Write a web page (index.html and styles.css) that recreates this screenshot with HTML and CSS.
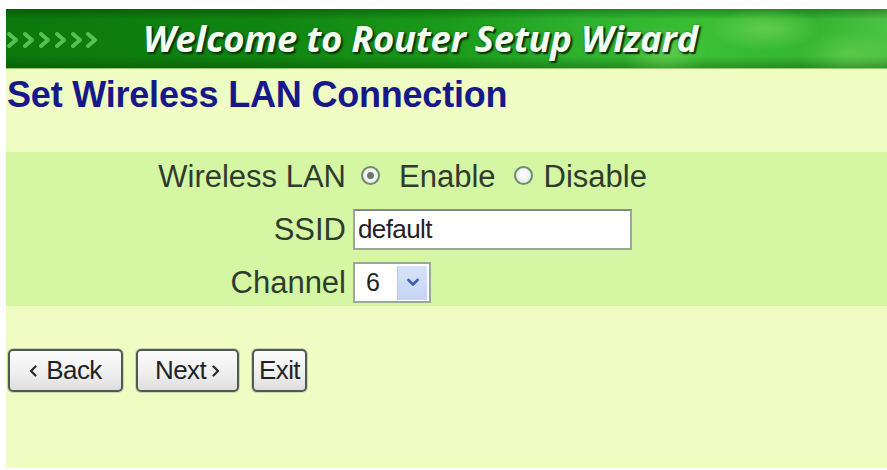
FILE: index.html
```html
<!DOCTYPE html>
<html lang="en">
<head>
<meta charset="utf-8">
<title>Router Setup Wizard</title>
<link rel="stylesheet" href="styles.css">
</head>
<body>
<div class="page">
  <div class="banner">
    <svg class="arrows" width="96" height="18" viewBox="0 0 96 18">
      <g fill="none" stroke="#66d466" stroke-width="3.8" stroke-linecap="round" stroke-linejoin="round" opacity="0.8">
        <path d="M2 3 L9 9 L2 15"/>
        <path d="M18 3 L25 9 L18 15"/>
        <path d="M34 3 L41 9 L34 15"/>
        <path d="M50 3 L57 9 L50 15"/>
        <path d="M66 3 L73 9 L66 15"/>
        <path d="M81 3 L88 9 L81 15"/>
      </g>
    </svg>
    <span class="banner-title">Welcome to Router Setup Wizard</span>
  </div>
  <h1 class="title">Set Wireless LAN Connection</h1>
  <div class="band">
    <div class="row">
      <div class="label">Wireless LAN</div>
      <div class="control">
        <span class="opt opt-first"><span class="radio checked"></span>Enable</span>
        <span class="opt"><span class="radio"></span>Disable</span>
      </div>
    </div>
    <div class="row">
      <div class="label">SSID</div>
      <div class="control">
        <div class="input">default</div>
      </div>
    </div>
    <div class="row">
      <div class="label">Channel</div>
      <div class="control">
        <div class="select">
          <span class="select-value">6</span>
          <span class="select-btn">
            <svg width="12" height="9" viewBox="0 0 12 9"><path d="M1.5 2 L6 6.5 L10.5 2" fill="none" stroke="#3d5fb0" stroke-width="2.6" stroke-linecap="round" stroke-linejoin="round"/></svg>
          </span>
        </div>
      </div>
    </div>
  </div>
  <div class="buttons">
    <button class="btn btn-back"><svg class="chev chev-l" width="8" height="12" viewBox="0 0 8 12"><path d="M6.5 1.5 L2 6 L6.5 10.5" fill="none" stroke="#2a2a2a" stroke-width="2.2" stroke-linecap="round" stroke-linejoin="round"/></svg>Back</button>
    <button class="btn btn-next">Next<svg class="chev chev-r" width="8" height="12" viewBox="0 0 8 12"><path d="M1.5 1.5 L6 6 L1.5 10.5" fill="none" stroke="#2a2a2a" stroke-width="2.2" stroke-linecap="round" stroke-linejoin="round"/></svg></button>
    <button class="btn btn-exit">Exit</button>
  </div>
</div>
</body>
</html>
```
FILE: styles.css
```css
html, body {
  margin: 0;
  padding: 0;
  background: #ffffff;
}
body {
  padding: 9px 0 2px 6px;
  font-family: "Liberation Sans", Arial, sans-serif;
}
.page {
  background: #effcc2;
  height: 459px;
  display: flex;
  flex-direction: column;
}
.banner {
  height: 59px;
  display: flex;
  align-items: center;
  background:
    radial-gradient(ellipse 60px 40px at 660px 45px, rgba(160,240,120,0.35), rgba(160,240,120,0) 70%),
    radial-gradient(ellipse 80px 30px at 760px 20px, rgba(170,240,130,0.35), rgba(170,240,130,0) 70%),
    radial-gradient(ellipse 70px 35px at 840px 45px, rgba(150,230,110,0.3), rgba(150,230,110,0) 70%),
    linear-gradient(180deg, rgba(0,40,0,0.35) 0%, rgba(0,0,0,0) 18%, rgba(0,0,0,0) 80%, rgba(0,40,0,0.3) 100%),
    linear-gradient(90deg, #0c780c 0%, #108510 30%, #1a9a1a 50%, #2eb22e 65%, #3bbf34 80%, #34b530 92%, #4cc244 100%);
  border-bottom: 1px solid #9ccf6a;
}
.arrows {
  flex-shrink: 0;
  margin-left: 1px;
  margin-right: 40px;
  margin-top: 2px;
}
.banner-title {
  font-family: "Open Sans", "Liberation Sans", sans-serif;
  font-style: italic;
  font-weight: 700;
  font-size: 36.5px;
  color: #f3fff0;
  text-shadow: 2px 2px 1px #0b3a0b, 1px 1px 3px #0b3a0b;
  letter-spacing: -0.3px;
  margin-top: -2px;
}
.title {
  margin: 8px 0 0 1px;
  font-size: 36px;
  line-height: 36px;
  font-weight: bold;
  color: #18188a;
  letter-spacing: -0.2px;
}
.band {
  margin-top: 39px;
  background: #d5f6a2;
  padding: 4px 0 3px 0;
  display: flex;
  flex-direction: column;
  gap: 12px;
}
.row {
  height: 41px;
  display: grid;
  grid-template-columns: 340px 1fr;
  column-gap: 7px;
  align-items: center;
}
.label {
  text-align: right;
  font-size: 31px;
  color: #2f3b2f;
  white-space: nowrap;
}
.control {
  display: flex;
  align-items: center;
  font-size: 31px;
  color: #2f3b2f;
}
.opt {
  display: inline-flex;
  align-items: center;
  margin-left: 18px;
}
.opt-first {
  margin-left: 8px;
}
.opt-first .radio {
  margin-right: 19px;
}
.radio {
  flex-shrink: 0;
  width: 15px;
  height: 15px;
  border-radius: 50%;
  border: 2px solid #6f8a70;
  background: radial-gradient(circle at 50% 40%, #ffffff, #dfe4df);
  margin-right: 11px;
  position: relative;
  margin-top: -2px;
}
.radio.checked::after {
  content: "";
  position: absolute;
  left: 4px;
  top: 4px;
  width: 7px;
  height: 7px;
  border-radius: 50%;
  background: #6b786c;
}
.input {
  width: 272px;
  height: 37px;
  border: 2px solid #9aa89a;
  border-top-color: #7f8c7f;
  background: #ffffff;
  font-size: 26px;
  line-height: 37px;
  padding-left: 3px;
  color: #222;
  letter-spacing: -0.6px;
  box-sizing: content-box;
}
.select {
  width: 74px;
  height: 37px;
  border: 2px solid #9aa89a;
  background: #ffffff;
  display: flex;
  align-items: center;
  justify-content: space-between;
}
.select-value {
  font-size: 25px;
  color: #222;
  padding-left: 11px;
}
.select-btn {
  width: 29px;
  height: 34px;
  margin-right: 2px;
  background: linear-gradient(180deg, #d7e3fa 0%, #c4d4f2 100%);
  border-left: 1px solid #b9c9e8;
  display: flex;
  align-items: center;
  justify-content: center;
}
.buttons {
  margin: 43px 0 0 2px;
  display: flex;
  gap: 13px;
}
.btn {
  height: 43px;
  border: 2px solid #4f5a50;
  border-radius: 5px;
  background: linear-gradient(180deg, #fbfbfb 0%, #eeeeee 60%, #dedede 100%);
  font-family: "Liberation Sans", Arial, sans-serif;
  font-size: 26px;
  color: #222;
  padding: 0;
  letter-spacing: -0.6px;
  box-shadow: 0 0 0 1px #c8d8b0;
  display: flex;
  align-items: center;
  justify-content: center;
}
.chev {
  flex-shrink: 0;
}
.chev-l {
  margin-right: 9px;
}
.chev-r {
  margin-left: 6px;
}
.btn-back {
  width: 115px;
}
.btn-next {
  width: 103px;
}
.btn-exit {
  width: 55px;
}
```
